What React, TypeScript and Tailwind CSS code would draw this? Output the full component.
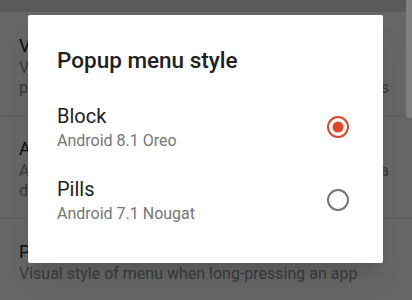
import React from 'react';

const settings = [
  {
    title: 'Vertical app drawer',
    lines: ['View the app drawer in a vertical list instead of', 'pages of icons, similar to previous Android versions'],
    // which summary line runs out to the right edge behind the dialog
    full: 1,
  },
  {
    title: 'App shortcuts',
    lines: ['Allow apps to show actions when you long-press a', 'desktop or drawer icon'],
    full: 0,
  },
  {
    title: 'Popup menu style',
    lines: ['Visual style of menu when long-pressing an app'],
    full: -1,
  },
];

const options = [
  { label: 'Block', sub: 'Android 8.1 Oreo', checked: true },
  { label: 'Pills', sub: 'Android 7.1 Nougat', checked: false },
];

function Radio({ checked }: { checked: boolean }) {
  return (
    <svg width="22" height="22" viewBox="0 0 22 22" className="shrink-0">
      <circle
        cx="11"
        cy="11"
        r="10"
        fill="none"
        stroke={checked ? '#e0452b' : '#757575'}
        strokeWidth="2"
      />
      {checked && <circle cx="11" cy="11" r="5.5" fill="#e0452b" />}
    </svg>
  );
}

export default function App() {
  return (
    <div className="relative h-[300px] w-[412px] overflow-hidden bg-[#666666] font-['Roboto',sans-serif]">
      {/* dimmed settings screen */}
      <div className="h-[12px] bg-[#5a5a5a]" />
      {settings.map((s, i) => (
        <div key={i}>
          {i > 0 && <div className="h-px bg-[#5b5b5b]" />}
          <div className={`pl-[19px] pb-[17px] ${i === 0 ? 'pt-[22px]' : 'pt-[21px]'}`}>
            <p className="text-[18px] leading-[24px] text-[#0d0d0d]">{s.title}</p>
            {s.lines.map((l, j) => (
              <p
                key={l}
                className={
                  j === s.full
                    ? 'w-[370px] text-justify text-[16px] leading-[20px] text-[#3a3a3a] [text-align-last:justify]'
                    : 'whitespace-nowrap text-[16px] leading-[20px] text-[#3a3a3a]'
                }
              >
                {l}
              </p>
            ))}
          </div>
        </div>
      ))}

      {/* scrollbar */}
      <div className="absolute right-0 top-0 h-[118px] w-[6px] rounded-bl-[3px] bg-[#7f7f7f]" />

      {/* dialog */}
      <div className="absolute left-[28px] top-[15px] h-[248px] w-[355px] rounded-[2px] bg-white pl-[29px] pr-[34px] pt-[31px] shadow-xl">
        <h2 className="text-[22.5px] font-medium leading-[28px] text-[#212121]">Popup menu style</h2>
        <div className="mt-[16px]">
          {options.map((o) => (
            <div key={o.label} className="flex h-[73px] items-center justify-between">
              <div className="flex flex-col gap-[2px]">
                <p className="text-[20px] leading-[26px] text-[#212121]">{o.label}</p>
                <p className="text-[16px] leading-[20px] text-[#757575]">{o.sub}</p>
              </div>
              <Radio checked={o.checked} />
            </div>
          ))}
        </div>
      </div>
    </div>
  );
}
